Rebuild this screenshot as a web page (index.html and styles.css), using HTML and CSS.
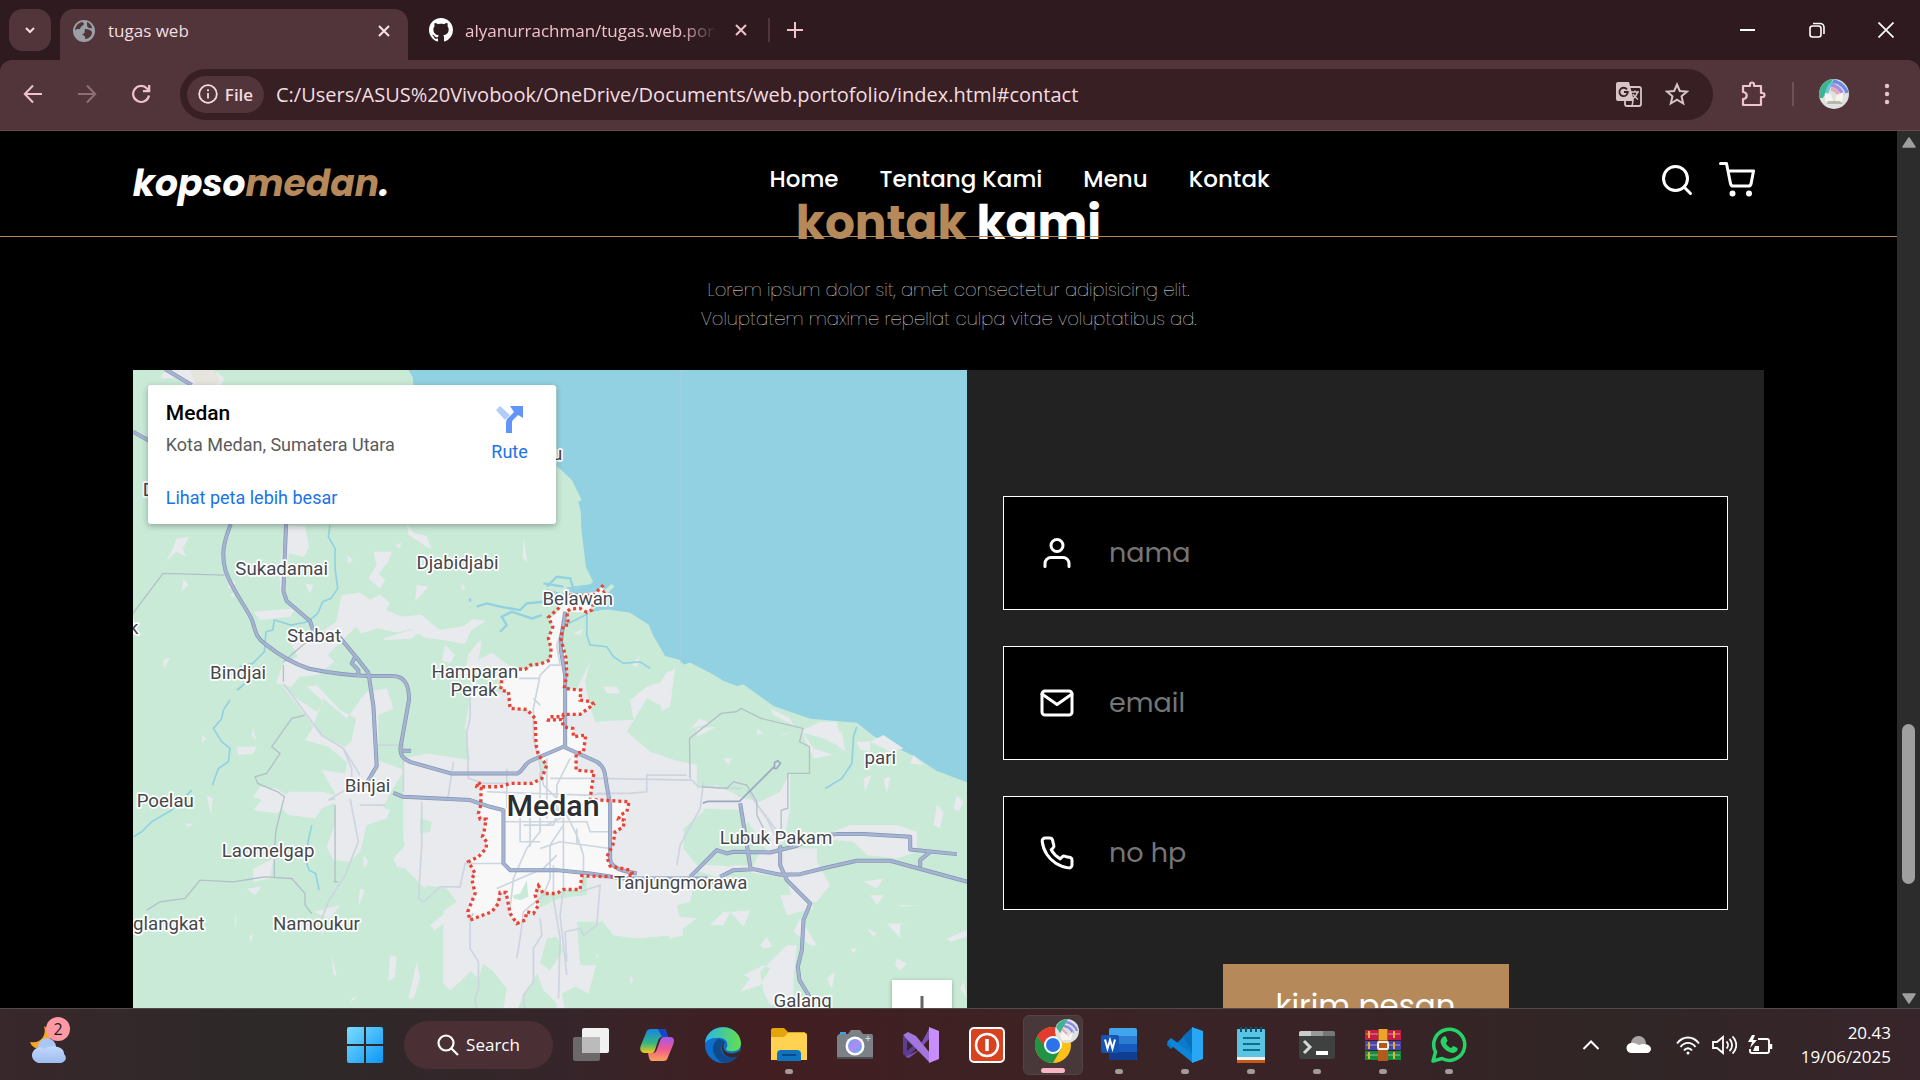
FILE: index.html
```html
<!DOCTYPE html>
<html lang="id">
<head>
<meta charset="utf-8">
<title>tugas web</title>
<link rel="stylesheet" href="styles.css">
</head>
<body>
<header class="browser">
  <div class="tabstrip">
    <button class="tab-search" aria-label="Search tabs"><svg width="12" height="12" viewBox="0 0 12 12"><path d="M2 4l4 4 4-4" fill="none" stroke="#f3dde0" stroke-width="2"/></svg></button>
    <div class="tab tab-active">
      <svg width="22" height="22" viewBox="0 0 22 22"><circle cx="11" cy="11" r="11" fill="#9aa0a6"/><path d="M9 2c3 1 2 3 0 4s-1 3-3 3-4 0-4 3c0-6 3-9 7-10zM12 9c3 0 6 1 7 3 0 4-3 7-7 7 1-3-1-3-3-5 4 0 2-3 3-5zM14 2c3 1 5 4 5 6-3 1-5-1-5-3z" fill="#51353a"/></svg>
      <span class="tab-title">tugas web</span>
      <button class="tab-close" aria-label="Close"><svg width="12" height="12" viewBox="0 0 12 12"><path d="M1 1l10 10M11 1L1 11" stroke="#f6e3e6" stroke-width="2"/></svg></button>
    </div>
    <div class="tab tab-idle">
      <svg width="24" height="24" viewBox="0 0 16 16"><path fill="#fff" d="M8 0C3.58 0 0 3.58 0 8c0 3.54 2.29 6.53 5.47 7.59.4.07.55-.17.55-.38 0-.19-.01-.82-.01-1.49-2.01.37-2.53-.49-2.69-.94-.09-.23-.48-.94-.82-1.13-.28-.15-.68-.52-.01-.53.63-.01 1.08.58 1.23.82.72 1.21 1.87.87 2.33.66.07-.52.28-.87.51-1.07-1.78-.2-3.64-.89-3.64-3.95 0-.87.31-1.59.82-2.15-.08-.2-.36-1.02.08-2.12 0 0 .67-.21 2.2.82.64-.18 1.32-.27 2-.27s1.36.09 2 .27c1.53-1.04 2.2-.82 2.2-.82.44 1.1.16 1.92.08 2.12.51.56.82 1.27.82 2.15 0 3.07-1.87 3.75-3.65 3.95.29.25.54.73.54 1.48 0 1.07-.01 1.93-.01 2.2 0 .21.15.46.55.38A8.01 8.01 0 0 0 16 8c0-4.42-3.58-8-8-8z"/></svg>
      <span class="tab-title">alyanurrachman/tugas.web.portofolio</span>
      <button class="tab-close" aria-label="Close"><svg width="12" height="12" viewBox="0 0 12 12"><path d="M1 1l10 10M11 1L1 11" stroke="#efc3cb" stroke-width="2"/></svg></button>
    </div>
    <span class="tab-divider"></span>
    <button class="new-tab" aria-label="New tab"><svg width="16" height="16" viewBox="0 0 16 16"><path d="M8 0v16M0 8h16" stroke="#efc3cb" stroke-width="2"/></svg></button>
    <div class="window-controls">
      <button aria-label="Minimize"><svg width="16" height="16" viewBox="0 0 16 16"><path d="M0 8h15" stroke="#fff" stroke-width="2"/></svg></button>
      <button aria-label="Restore"><svg width="16" height="16" viewBox="0 0 16 16" fill="none" stroke="#fff" stroke-width="1.6"><rect x="1" y="4" width="11" height="11" rx="2.5"/><path d="M4 1.5h7a4 4 0 0 1 4 4V12"/></svg></button>
      <button aria-label="Close window"><svg width="16" height="16" viewBox="0 0 16 16"><path d="M.5.5l15 15M15.500.5l-15 15" stroke="#fff" stroke-width="1.7"/></svg></button>
    </div>
  </div>
  <div class="toolbar">
    <button class="tool" aria-label="Back"><svg width="20" height="20" viewBox="0 0 20 20" fill="none" stroke="#efc3cb" stroke-width="2"><path d="M19 10H2M10 1.500L1.800 10 10 18.500"/></svg></button>
    <button class="tool" aria-label="Forward"><svg width="20" height="20" viewBox="0 0 20 20" fill="none" stroke="#8f6f74" stroke-width="2"><path d="M1 10h17M10 1.500l8.200 8.500-8.200 8.500"/></svg></button>
    <button class="tool" aria-label="Reload"><svg width="20" height="20" viewBox="0 0 20 20" fill="none" stroke="#efc3cb" stroke-width="2.200"><path d="M18 11.500A8 8 0 1 1 16 4.500l2 2.500M18.200 1v6.200H12"/></svg></button>
    <div class="omnibox">
      <button class="file-chip"><svg width="20" height="20" viewBox="0 0 20 20" fill="none" stroke="#f3dde0" stroke-width="1.800"><circle cx="10" cy="10" r="8.800"/><path d="M10 9v5.500M10 5.200v2"/></svg>File</button>
      <input class="url" type="text" aria-label="Address" value="C:/Users/ASUS%20Vivobook/OneDrive/Documents/web.portofolio/index.html#contact">
      <button class="omni-icon" aria-label="Translate"><svg width="26" height="26" viewBox="0 0 26 26"><rect x="9" y="6" width="16" height="19" rx="2" fill="none" stroke="#d8c4c7" stroke-width="1.800"/><path d="M2 1h11l5 19H2a2 2 0 0 1-2-2V3a2 2 0 0 1 2-2z" fill="#d8c4c7"/><path d="M11 8.500A4.200 4.200 0 1 0 11.800 11H8" fill="none" stroke="#371f23" stroke-width="1.800"/><path d="M15 11h8M19 9.500V11M21.500 11c-.5 3-3 5.500-5 7M17 13c1 2 3 4 5 5.500M17 20l-1 5" fill="none" stroke="#d8c4c7" stroke-width="1.500"/></svg></button>
      <button class="omni-icon" aria-label="Bookmark"><svg width="24" height="24" viewBox="0 0 24 24"><path d="M12 2.500l2.800 6.500 7.200.6-5.500 4.700 1.700 7.200-6.200-3.800-6.200 3.800 1.700-7.200L2 9.600 9.200 9z" fill="none" stroke="#d8c4c7" stroke-width="2"/></svg></button>
    </div>
    <button class="tool ext" aria-label="Extensions"><svg width="26" height="26" viewBox="0 0 26 26"><path d="M3 5h7V3.500a2 2 0 0 1 4 0V5h7v7h1.500a2 2 0 0 1 0 4H21v8H3v-6c5-.5 5-6.500 0-7z" fill="none" stroke="#efc3cb" stroke-width="2.200" stroke-linejoin="round"/></svg></button>
    <span class="tool-divider"></span>
    <button class="tool avatar" aria-label="Profile"><svg width="30" height="30" viewBox="0 0 30 30"><clipPath id="av"><circle cx="15" cy="15" r="15"/></clipPath><g clip-path="url(#av)"><rect width="30" height="30" fill="#dfe2e1"/><path d="M0 0h14L4 19H0z" fill="#3fb38d"/><g fill="none" stroke-width="3.500"><path d="M7 17C9 8 11 4 17 2" stroke="#69c8d8"/><path d="M14 2c7 1 13 7 14 12" stroke="#6f8be8"/><path d="M12 6c6 1 10 5 12 10" stroke="#a98fe0"/><path d="M12 10c5 1 7 3 8 8" stroke="#e8a7b5"/></g><path d="M6 14l6 1 3 9-9-2zM17 16l8-3-2 10-7 1z" fill="#f7f4ee"/><path d="M9 22h12l3 3H8z" fill="#b9b6ae"/></g></svg></button>
    <button class="tool menu" aria-label="Menu"><svg width="6" height="22" viewBox="0 0 6 22" fill="#efc3cb"><circle cx="3" cy="3" r="2.200"/><circle cx="3" cy="11" r="2.200"/><circle cx="3" cy="19" r="2.200"/></svg></button>
  </div>
</header>

<div class="viewport">
  <main class="page">
    <nav class="navbar">
      <a class="logo" href="#home">kopso<span>medan</span>.</a>
      <div class="nav-links">
        <a href="#home">Home</a><a href="#about">Tentang Kami</a><a href="#menu">Menu</a><a href="#contact">Kontak</a>
      </div>
      <div class="nav-extra">
        <a href="#search" aria-label="Search"><svg class="feather" viewBox="0 0 24 24"><circle cx="11" cy="11" r="8"/><path d="M21 21l-4.350-4.350"/></svg></a>
        <a href="#cart" aria-label="Cart"><svg class="feather" viewBox="0 0 24 24"><circle cx="9" cy="21" r="1"/><circle cx="20" cy="21" r="1"/><path d="M1 1h4l2.680 13.390a2 2 0 0 0 2 1.610h9.720a2 2 0 0 0 2-1.610L23 6H6"/></svg></a>
      </div>
    </nav>
    <section class="contact" id="contact">
      <h2><span>kontak</span> kami</h2>
      <p>Lorem ipsum dolor sit, amet consectetur adipisicing elit.<br>Voluptatem maxime repellat culpa vitae voluptatibus ad.</p>
      <div class="row">
        <div class="map">
          <svg class="map-art" viewBox="9 15 2502 2370" role="img" aria-label="Peta Medan">
            <rect x="9" y="15" width="2502" height="2370" fill="#c9ead7"/>
            <path fill="#92d1e2" d="M835 15l13 22 2 30h430v236l45 42 30 60-10 5 7 30 2 55 8 65 5 45 22 45-14 12-60 13 35 22 45 0 50-40 8 7-25 25-43 51 30-5 18-2 67 10 55 35 15 35 35 60 45 12 10 13 20-5 60 30 40 25 40 15 20-5 35 25 55 40 110 38 140 12 50 40 130 65 60 40 95 35V15z"/>
            <path d="M1651 15v880" stroke="#a9cfda" stroke-width="2"/>
            <g fill="#e8eaed">
              <path d="M90 40l15-25h90l15 25 5 25-40-5-35-20zM260 20l22 20-8 22h-30z"/>
              <path d="M180 15h70l20 30-20 20h-50z" fill="#e6e4dc"/>
              <path d="M475 480l50 5 12 60-15 30-45-10-10 60-15 70-5-80 15-90zM140 520l38-5-20 35 10 25-30-15-30 30 20-40zM635 690l55-8 30 22 30-15 30 25-12 20 45 20 60-5 55 45 70-10 30-22 40 5-45 30-20 40-50-10-70-10-40-25-40 10-60-12-50 15-15-20-60 60-25 25 20 20-50 40-55 5-25 30-45-10 20-60 45-20-20-40 30-25 60-10 45-30zM730 560l55 0-10 30-30 35 20 20-15 25-35-30 25-40zM830 478l20 25 40 10 15 40-20-10-50-35zM370 740l60-5 65-5-15 25-90 10zM760 820l80-25 30 5-25 20-80 5zM945 840l30 30-15 25-25-10zM1040 835l15-10-10 60 40-22 55 40 30 25-60 20-60-25-45 5 10-60zM525 655l25 5-10 25zM1180 515l12 75-14-10zM860 660l35 5-40 45z"/>
              <path d="M300 640l18 12-15 20-10-5zM160 640l15 20-20 20zM100 885l20-8-18 35zM370 1090l8 35-14-15zM215 1110l15 10-14 12zM320 1145l60 0-10 20-45 5zM300 690l15-10-5 20zM650 570l20 15-15 10zM995 655l12 15-12 5zM795 540l20-8-8 18z"/>
              <path d="M455 960l120 155 70 30 70-60-35-25-50-25-70-75-30 5 50 45-20 30-60-40zM690 1000l30-5 20 190 85 30-40 60-40 80-70-20-60 50 10-80-50-90 70 10zM615 1290l60 30 25-20 80 35-10 25-60 20-20 80-30 30-50-5-20-40 25-70zM480 1280l100 0 65 20-70 30-20 30-80-10-40-40zM390 1265l50 5 50 35-50 40-70-10 25-30-25-10zM580 1000l70 60 60-80 60-10 20 60-45 20 0 90-20 70-70-15-60-50-70-20 20-30z"/>
              <path d="M820 1180l70-15 130 20-15-100 15-90 30-20 90 10 10 45 60 20 30 200-10 60 0 500-50 80-30 70-30-30 10-60-40-50-40-30-60 60-30 25-20-20v-260l-60-30-50-50-10-100z"/>
              <path d="M975 1830l30-160 50-40 60-10 20-30 30 70 120-60 240-30 20 50-30 40-60-10-60 25-30 50 40 50-30 110-40-20-40 20 20 110-35-20 0-60-40-40-30-80-70 0-30-100-100 50zM1010 1700l50 20 10 40-25 80-40-40zM900 1680l50-40 50 15-50 10-35 30zM790 1480l40-45 60 20-20 30-20 30-50-10zM780 1770l20 5-5 60-20 15zM860 1790l10 50-20 60-15 0zM550 1640l80-20-30 40zM370 1510l60-30-10 60-50 10zM350 1570l45-5-20 25zM230 1290l18 10-5 50zM165 1375l25 0-15 12zM700 1470l15 20-15 20zM315 1640l5 30-5 20zM358 1710h10l-5 25zM605 1770l15 60-10 0zM680 1895l-20 20 5-15zM690 1570l15 5-20 50zM575 1660l15 30-15 20z"/>
              <path d="M1340 970l40-80-15 60 10 60 20 60 95-5 20 0-10-60 50-40 60-20 25-40-15 120-60 30 10 60 60 70 70 15 0 70 60-10 60 30 50 60-40 50-40-30-60-40-70 60 0 60 40 50-30 70-50 0-10 80 90 10-70 50-110 10-70-10-80-100 0-200-60-40-50-200z"/>
              <path d="M1420 1530l280-20-20 100-40 10 20 90-40 10-30-90-60 60-10-100-100-10zM1640 1500l230 0 20-40 110-10 60 0 0 40 40 70-40 50-70 10-20-80-150-25-60 20zM1890 1310l60-30 30-60 0 110-20 100-40 40-60-90-60-90zM1950 1590l90 0 10 40-80 20zM1990 1700l20-40 50 80-20 0zM1970 1740l30 0-10 100 0 60-70 20-20-40-10-60zM1860 1840l-30 40 60-20 30-50-20-10-60 30z"/>
              <path d="M2160 1380l140 0 60 20 0 60-60 20-90-10-40-40-110-10zM2070 1070l50 0 20 80-60-30-70-20zM2010 1090l40 60 60 20-60 10zM2180 1130l40 0 0 30-30-5zM2220 1130l40-20 60 40-40 10zM2350 1170l30 30-40-5zM1920 1030l60 30 10 20-60-30zM1710 1060l30 15-60 15zM1700 1090l60-5-60 30zM1780 1180l25 0-10 20zM1950 1110l50-15-40 15zM1880 1090l20 15-20 5zM2480 1290l20 20-15 30-15-10zM2420 1320l20 20-10 50-20-10zM2200 1240l25-10-20 50zM2260 1240l20-5-10 50zM2110 1110l25-10 10 60-20-15zM1610 920l25-5-45 70-10-10zM1420 965l40 0 10 20-40 0zM1530 870l-10 35-15-5zM1360 790l-10 20-20-5zM2200 1550l60-10-20 30zM2220 1590l40 0-20 30zM2300 1620l70 0-50 5zM1890 1740l20-25 15 30-25 5zM1780 1640l20 0-20 40-40 0zM1740 1660l50-35zM1800 1640l60-5-20 50zM2210 1690l30 15-10 10zM2270 1675l60 0-20 5 0 40zM2450 1720l60-25 0 20-50 15zM2300 1780l30 15-20 20-15-15zM2160 1750l20 0-10 15zM2090 1840l25-20-10 50zM2500 1850l10 50-20-30zM1500 1830l10 10-8 20z"/>
            </g>
            <g fill="#c9ead7"><path d="M890 1560l60 10 30 40-60 40-40-20zM870 1360l35 10-5 30-30 5zM1250 1720l30-5 20 40-40 60-30-20zM1340 1670l60 0 10 30-20 50 20 50-60 0zM1550 1000l40 20 20 60 60 40 10 50-60 10-60-20-70-60zM1720 1330l110 5 10 70 20 30-60 70-80-10z"/></g>
            <g fill="none" stroke="#92d1e2" stroke-width="5">
              <path d="M600 480l-5 35 20 35v60l8 60-20 30-25 10-15 35-30 25-50 10-50-15-5 30-20 5-5 60-35 35-40 10M322 975l22-20"/>
              <path d="M1040 725l30-10 40 10 60 10 20-20 50-5M1110 800l20-20-15-25 30-15 60 20 30-10M1020 710v-10M1240 655l60 10M1250 665l30-30 40 5 10 30-30 20-50-15" stroke-width="7"/>
              <path d="M1375 745l-60 30M1370 750v60l10 30 50 5 20 30 30 20 50-5 30 20M1310 670l70-10"/>
              <path d="M300 1005l-20 30-5 25-25 30 25 40 25 20-5 40-30 20-18 50M185 1275l-60 60-60 35-30 30-25 15M545 1380l-10 45-8 60 10 30 20 10 10 50M340 960l-20 15"/>
              <path d="M2180 1085l-10 30-5 80-30 45-50 30"/>
            </g>
            <path fill="#f8f8f8" d="M1420 660L1400 680 1320 690 1275 750 1255 757 1268 785 1255 820 1263 850 1260 885 1230 897 1185 913 1115 915 1112 975 1135 980 1140 1030 1190 1033 1215 1060 1218 1140 1225 1170 1250 1200 1235 1240 1205 1255 1140 1255 1055 1265 1052 1320 1045 1345 1068 1362 1057 1415 1070 1430 1068 1450 1015 1490 1035 1525 1025 1540 1035 1585 1013 1640 1020 1665 1085 1640 1110 1582 1128 1582 1140 1645 1160 1675 1185 1665 1190 1640 1210 1645 1225 1620 1215 1590 1225 1562 1240 1585 1280 1585 1300 1573 1350 1573 1355 1532 1440 1535 1510 1530 1440 1503 1430 1475 1448 1440 1455 1400 1480 1385 1497 1310 1380 1303 1392 1220 1338 1215 1338 1165 1360 1160 1367 1110 1328 1112 1328 1090 1300 1085 1300 1048 1350 1048 1390 1018 1350 1005 1352 975 1302 970 1310 930 1308 880 1292 820 1310 740 1370 742 1420 680z"/>
            <path d="M1150 1590l20-5 20-40 5 50-25 10-20-5z" fill="#c9ead7"/>
            <g fill="none" stroke="#ccd5e0" stroke-width="5">
              <path d="M1300 780l-20 60 10 60-30 0-30 30-20 100 0 90 20 80 10 60 60 60 0 60-40 60 0 100-20 50-60 50-10 80-10 60M1210 1000l20 20M1160 940h70M1070 1280l300 10 70-5M1200 1285v160M1230 1220v180l-40 50-40 90-10 90M1120 1370h250l10 30h70M1250 1380l60-30 30 60 20 60v90M1300 1330v240l-10 80 20 180M1170 1350v80h60M1130 1210v120M1260 1240h140l285 5 20 20 130 5M1180 1380h90l20-60M1400 1285h100l50-5 0-50 120 0M1270 1500v100l20 120-5 180M1350 1580l60-20-10 120-40 30-10-20-45 10 5 90M1100 1570l140-60 40-40M1230 1450l60-20 150 20M1280 1350v-90l40-80M1250 1180v180M1340 1390v50"/>
              <path d="M1020 980v80l-10 40 5 140 50 15 60 0M970 1190l-15 100-5 15M740 1140h80v140M875 1310v130l-10 160 15 10 50-45 60 0 15-70 110 0M690 1320h75M660 1300l25 130-40 100-50 80-20 50M615 1300l-20 5 50-30M460 955l115 155 65 40 50 80M640 1150l25 60 0 60M1020 1660l0 90 25 40 0 80-10 30 5 50M1230 1660l5 50-25 40v100l-30 40 5 60M1640 1500l10-60 60-110 10-80M1950 1440l-40-80-60-85M1890 1330l60 80"/>
            </g>
            <g fill="none" stroke="#b3c0c9" stroke-width="4">
              <path d="M9 745l90-120 185 5M460 900l0 50M460 890l70-60M525 1050l-40 10-60 85 25 20-40 60-35 10 8 20 60 25 20 15-25 100-5 60v80M50 1635l40-25 75-10 45-55 100 5 95-15 80 5 40 45 0 35 20 25M610 1550h15M615 1320l0 230M1020 1660l10-15"/>
              <path d="M1680 1240l-2-120 95-75 45-5 15-10 60 30 125 30-10 40 30 15v80h-65v105l-20 5v90M1715 1265l75 5 20-20 40 10 30 50v40l40 80"/>
            </g>
            <g class="roads-case">
              <path d="M105 12l80 48M9 200l50 28M302 478c-20 50-30 90-15 140 20 60 70 120 80 150s10 50 40 70c50 40 90 60 130 73 50 10 120 20 180 22h70c40 0 50 30 50 70l-25 140c-5 30 10 40 30 48l120 34h200c20-10 20-30 40-38L1300 1145 1400 1190C1425 1205 1425 1230 1428 1250L1440 1320V1480C1440 1510 1480 1518 1520 1525"/>
              <path d="M468 478l-8 200 10 30 70 60 10 30 80 20 50 60 35 45 15 100 10 180-35 60M675 875l-10 20 20 20 0 20M790 1283l30 12 200 10 60 20 40 10 0 160 20 20 140 0 100 10 100 15 250 0 30 15M1305 740c-5 50-20 90-10 130l10 60v220"/>
              <path d="M1680 1535l70-70 10-10 30 10 20-5 110 2 80-20 60-30 60-5 80 0 140 8v38l140 14M1770 1535l40-20 60-3 80 17 60-2 80-20 90-20h100l110 30 130 35M1830 1315l10 60 22 140M1950 1440v60l20 45 70 70-20 50-5 90-12 50 5 40 30 50M2370 1505l0-20 30-25M818 1157h25"/>
            </g>
            <g class="roads">
              <path d="M105 12l80 48M9 200l50 28M302 478c-20 50-30 90-15 140 20 60 70 120 80 150s10 50 40 70c50 40 90 60 130 73 50 10 120 20 180 22h70c40 0 50 30 50 70l-25 140c-5 30 10 40 30 48l120 34h200c20-10 20-30 40-38L1300 1145 1400 1190C1425 1205 1425 1230 1428 1250L1440 1320V1480C1440 1510 1480 1518 1520 1525"/>
              <path d="M468 478l-8 200 10 30 70 60 10 30 80 20 50 60 35 45 15 100 10 180-35 60M675 875l-10 20 20 20 0 20M790 1283l30 12 200 10 60 20 40 10 0 160 20 20 140 0 100 10 100 15 250 0 30 15M1305 740c-5 50-20 90-10 130l10 60v220"/>
              <path d="M1680 1535l70-70 10-10 30 10 20-5 110 2 80-20 60-30 60-5 80 0 140 8v38l140 14M1770 1535l40-20 60-3 80 17 60-2 80-20 90-20h100l110 30 130 35M1830 1315l10 60 22 140M1950 1440v60l20 45 70 70-20 50-5 90-12 50 5 40 30 50M2370 1505l0-20 30-25M818 1157h25"/>
            </g>
            <path d="M1718 1314l15-5h95l105-105 0-12 10-5 8 8-12 15h-8" fill="none" stroke="#9aa8c4" stroke-width="5"/>
            <path fill="none" stroke="#ea4335" stroke-width="10" stroke-dasharray="9 9" d="M1420 660L1400 680 1390 690 1320 690 1285 730 1255 757 1268 785 1255 820 1263 850 1260 885 1230 897 1200 900 1185 913 1160 912 1115 945 1112 975 1135 980 1140 1030 1190 1033 1215 1060 1218 1140 1225 1170 1250 1200 1235 1240 1205 1255 1140 1255 1110 1265 1055 1265 1045 1250 1040 1265 1053 1270 1052 1320 1045 1345 1050 1362 1068 1362 1062 1400 1057 1415 1070 1430 1068 1450 1045 1475 1015 1490 1035 1525 1025 1540 1035 1585 1013 1640 1020 1665 1045 1655 1085 1640 1105 1615 1110 1582 1128 1582 1140 1645 1160 1675 1185 1665 1190 1640 1210 1645 1225 1620 1215 1590 1225 1562 1240 1585 1280 1585 1300 1573 1350 1573 1355 1532 1440 1535 1510 1530 1500 1515 1440 1503 1430 1475 1448 1440 1455 1400 1480 1385 1482 1365 1465 1362 1470 1350 1490 1340 1497 1310 1380 1303 1385 1265 1392 1220 1338 1215 1338 1165 1360 1160 1367 1110 1330 1115 1328 1090 1300 1085 1295 1063 1255 1065 1258 1055 1298 1055 1300 1048 1350 1048 1390 1018 1385 1010 1350 1005 1352 975 1302 970 1310 930 1308 880 1292 820 1300 780 1315 780 1310 740 1320 732 1350 730 1370 742 1385 735 1390 710 1424 678"/>
            <g class="labels">
              <text x="316" y="630">Sukadamai</text><text x="859" y="612">Djabidjabi</text>
              <text x="471" y="830">Stabat</text><text x="240" y="941">Bindjai</text>
              <text x="904" y="938">Hamparan</text><text x="961" y="993">Perak</text>
              <text x="1237" y="721">Belawan</text><text x="38" y="394">D</text><text x="-3" y="808">k</text><text x="1266" y="285">u</text>
              <text x="644" y="1280">Binjai</text><text x="20" y="1326">Poelau</text>
              <text x="275" y="1476">Laomelgap</text><text x="429" y="1695">Namoukur</text>
              <text x="-22" y="1694">nglangkat</text><text x="2203" y="1197">pari</text>
              <text x="1769" y="1436">Lubuk Pakam</text><text x="1452" y="1571">Tanjungmorawa</text>
              <text x="1930" y="1926">Galang</text>
              <text class="city" x="1129" y="1352">Medan</text>
            </g>
          </svg>
          <div class="place-card">
            <div class="place-info">
              <strong>Medan</strong>
              <span>Kota Medan, Sumatera Utara</span>
              <a href="#map">Lihat peta lebih besar</a>
            </div>
            <a class="route" href="#route"><svg width="28" height="28" viewBox="0 0 28 28"><path d="M0 5l4-4 10 9-5 5z" fill="#b3cdfb"/><path d="M10 28V18c0-3 1-4 3-6l5-5-4-6h13v12l-5-3-5 5c-1 1-1 2-1 3v10z" fill="#6196f8"/></svg>Rute</a>
          </div>
          <div class="zoom"><button aria-label="Perbesar"><svg width="20" height="28" viewBox="0 0 20 28"><path d="M10 0v28M0 14h20" stroke="#666" stroke-width="3"/></svg></button></div>
        </div>
        <form class="form">
          <label class="field"><svg class="feather" viewBox="0 0 24 24"><path d="M20 21v-2a4 4 0 0 0-4-4H8a4 4 0 0 0-4 4v2"/><circle cx="12" cy="7" r="4"/></svg><input type="text" placeholder="nama" aria-label="nama"></label>
          <label class="field"><svg class="feather" viewBox="0 0 24 24"><path d="M4 4h16c1.100 0 2 .9 2 2v12c0 1.100-.9 2-2 2H4c-1.100 0-2-.9-2-2V6c0-1.100.9-2 2-2z"/><path d="M22 6l-10 7L2 6"/></svg><input type="text" placeholder="email" aria-label="email"></label>
          <label class="field"><svg class="feather" viewBox="0 0 24 24"><path d="M22 16.920v3a2 2 0 0 1-2.180 2 19.790 19.790 0 0 1-8.630-3.070 19.500 19.500 0 0 1-6-6 19.790 19.790 0 0 1-3.070-8.670A2 2 0 0 1 4.110 2h3a2 2 0 0 1 2 1.720 12.840 12.840 0 0 0 .7 2.810 2 2 0 0 1-.45 2.110L8.090 9.910a16 16 0 0 0 6 6l1.270-1.270a2 2 0 0 1 2.110-.45 12.840 12.840 0 0 0 2.810.7A2 2 0 0 1 22 16.920z"/></svg><input type="text" placeholder="no hp" aria-label="no hp"></label>
          <button class="send" type="button">kirim pesan</button>
        </form>
      </div>
    </section>
  </main>
  <div class="scrollbar">
    <svg width="14" height="11" viewBox="0 0 14 11"><path d="M7 1l6 9H1z" fill="#9f9f9f" stroke="#9f9f9f" stroke-width="1.500" stroke-linejoin="round"/></svg>
    <div class="track"><div class="thumb"></div></div>
    <svg width="14" height="11" viewBox="0 0 14 11"><path d="M7 10l6-9H1z" fill="#9f9f9f" stroke="#9f9f9f" stroke-width="1.500" stroke-linejoin="round"/></svg>
  </div>
</div>

<footer class="taskbar">
  <div class="widgets">
    <button class="weather" aria-label="Weather"><svg width="38" height="38" viewBox="0 0 38 38"><defs><linearGradient id="cl" x1="0" y1="0" x2="0" y2="1"><stop offset="0" stop-color="#c3d9fb"/><stop offset="1" stop-color="#9dbcf0"/></linearGradient></defs><path d="M15 0c3 9-3 18-14 16 2 6 8 8 14 6 8-3 8-17 0-22z" fill="#f7a823"/><circle cx="18" cy="21" r="9" fill="#a9c6f5"/><path d="M9 37a8 8 0 1 1 7-14c4-5 20-3 19 5 4 4 1 9-5 9z" fill="url(#cl)"/></svg><span class="badge">2</span></button>
  </div>
  <div class="apps">
    <button class="app" aria-label="Start"><svg width="36" height="36" viewBox="0 0 36 36"><defs><linearGradient id="wi" x1="0" y1="0" x2="1" y2="1"><stop offset="0" stop-color="#7ddcff"/><stop offset="1" stop-color="#0a97f5"/></linearGradient></defs><path fill="url(#wi)" d="M2 0h15v17H0V2a2 2 0 0 1 2-2zM19 0h15a2 2 0 0 1 2 2v15H19zM0 19h17v17H2a2 2 0 0 1-2-2zM19 19h17v15a2 2 0 0 1-2 2H19z"/></svg></button>
    <button class="search-pill"><svg width="22" height="22" viewBox="0 0 22 22" fill="none" stroke="#fff" stroke-width="2.200"><circle cx="9" cy="9" r="7.500"/><path d="M14.500 14.500l6.500 6.500"/></svg>Search</button>
    <button class="app" aria-label="Task view"><svg width="36" height="34" viewBox="0 0 36 34"><rect y="9" width="27" height="24" rx="2" fill="#6b6969"/><rect x="9" width="27" height="25" rx="2" fill="#f1f1f1"/><path d="M9 9h18v16H9z" fill="#bcbbbb"/></svg></button>
    <button class="app" aria-label="Copilot"><svg width="34" height="32" viewBox="0 0 34 32"><defs><linearGradient id="c1" x1="0" y1="0" x2="0" y2="1"><stop offset="0" stop-color="#1785e8"/><stop offset=".6" stop-color="#37b67c"/><stop offset="1" stop-color="#f6c915"/></linearGradient><linearGradient id="c2" x1="0" y1="0" x2="0" y2="1"><stop offset="0" stop-color="#a259f0"/><stop offset=".5" stop-color="#f0598f"/><stop offset="1" stop-color="#fba35c"/></linearGradient></defs><path d="M11 0h13c2 0 2 2 3 5l1 3h-6c-2 0-3 1-4 4l-3 9c-1 3-2 3-4 3H5c-4 0-6-3-4-8L6 4c1-3 2-4 5-4z" fill="url(#c1)"/><path d="M18 0h6c2 0 2 2 3 5l1 3h-6z" fill="#1447c6"/><path d="M23 32H12c-2 0-3-2-4-8h5c2 0 3-1 4-4l3-8c1-3 2-4 4-4h6c4 0 5 3 3 8l-5 12c-1 3-2 4-5 4z" fill="url(#c2)"/></svg></button>
    <button class="app" aria-label="Edge"><svg width="36" height="36" viewBox="0 0 36 36"><defs><linearGradient id="e1"><stop offset="0" stop-color="#2bb4ea"/><stop offset="1" stop-color="#63e048"/></linearGradient></defs><circle cx="18" cy="18" r="18" fill="#0d6fc9"/><path d="M0 16C2-5 34-5 36 16c0 7-5 9-12 8-4-1-3-2-2-4 2-6-4-10-10-9C6 11 2 13 0 16z" fill="url(#e1)"/><path d="M13 12c-9 6-5 22 7 24 6 0 11-4 13-8-5 3-14 3-16-3-2-4 0-8 3-10-2-2-4-3-7-3z" fill="#114a8b"/><path d="M20 15c-3 4-2 9 3 11 4 1 9 0 11-2l2 2-2 3c-5 2-14 2-16-4-2-4-1-8 2-10z" fill="#3a2527"/></svg></button>
    <button class="app run" aria-label="Explorer"><svg width="36" height="33" viewBox="0 0 36 33"><path d="M0 2c0-1 1-2 2-2h11l4 4h17v6H0z" fill="#e2a50b"/><path d="M0 9h13l4-4h17a2 2 0 0 1 2 2v25H0z" fill="#ffd252"/><path d="M6 33v-7a4 4 0 0 1 4-4h16a4 4 0 0 1 4 4v7z" fill="#0f74bf"/><path d="M11 27h14" stroke="#0a4a86" stroke-width="2"/></svg></button>
    <button class="app" aria-label="Camera"><svg width="36" height="30" viewBox="0 0 36 30"><defs><linearGradient id="ca" x1="0" y1="0" x2="1" y2="1"><stop offset="0" stop-color="#5aa6f5"/><stop offset=".5" stop-color="#b48af0"/><stop offset="1" stop-color="#3fb6f0"/></linearGradient></defs><path d="M3 2h6v5H3z" fill="#35a4e8"/><path d="M2 4h9l3-4h9l3 4h8a2 2 0 0 1 2 2v21H0V6z" fill="#7c8087"/><path d="M0 27h36v2H0z" fill="#4b4d51"/><circle cx="18" cy="16" r="9.500" fill="#fff"/><circle cx="18" cy="16" r="7" fill="url(#ca)"/><path d="M31 6v5M28.500 8.500h5" stroke="#d5d7da"/></svg></button>
    <button class="app" aria-label="Visual Studio"><svg width="36" height="36" viewBox="0 0 36 36"><path d="M0 10l4-3 10 9v5L4 30l-4-3z" fill="#5d3c94"/><path d="M4 14v10l6-5z" fill="#38272a"/><path d="M14 24L27 0v11L14 25l-8 6-4-1z" fill="#7a53b3"/><path d="M0 8l5-3 8 4 14 17v10z" fill="#a276dc"/><path d="M26 0l10 4v28l-10 4z" fill="#c78dfb"/></svg></button>
    <button class="app" aria-label="Shutdown"><svg width="36" height="36" viewBox="0 0 36 36"><rect x="1" y="1" width="34" height="34" rx="4" fill="#d9421f" stroke="#fff" stroke-width="2"/><circle cx="18" cy="18" r="11" fill="none" stroke="#fff" stroke-width="2.500"/><path d="M18 12v12" stroke="#fff" stroke-width="3.500"/></svg></button>
    <button class="app run current" aria-label="Chrome"><svg width="44" height="44" viewBox="0 0 44 44"><circle cx="18" cy="26" r="18" fill="#fbc116"/><path d="M2.400 17A18 18 0 0 1 33.600 17H18l-8 13z" fill="#e33b2e"/><path d="M2.400 17A18 18 0 0 0 18 44l8-14H11z" fill="#229344"/><circle cx="18" cy="26" r="9" fill="#fff"/><circle cx="18" cy="26" r="7" fill="#2a74e8"/><circle cx="32" cy="12" r="12" fill="#dfe2e1"/><path d="M21 8c3-6 8-8 12-8l-8 14z" fill="#3fb38d"/><path d="M30 3c6 0 11 5 12 9M29 7c5 1 8 4 9 7" fill="none" stroke="#8a8fe4" stroke-width="2.500"/><path d="M25 16l4-5 4 7 5-6-2 9-9 0z" fill="#f8f5ef"/><path d="M27 10l5 5" stroke="#e8a7b5" stroke-width="2"/></svg></button>
    <button class="app run" aria-label="Word"><svg width="36" height="33" viewBox="0 0 36 33"><rect x="8" width="28" height="32" rx="2" fill="#41a5ee"/><path d="M8 8h28v8H8z" fill="#2b7cd3"/><path d="M8 16h28v8H8z" fill="#185abd"/><path d="M8 24h28v6a2 2 0 0 1-2 2H8z" fill="#103f91"/><rect y="7" width="18" height="18" rx="2" fill="#1553b5"/><path d="M4 11.500l2.500 9 2.500-8.500 2.500 8.500 2.500-9" fill="none" stroke="#fff" stroke-width="2"/></svg></button>
    <button class="app run" aria-label="VS Code"><svg width="36" height="36" viewBox="0 0 36 36"><path d="M26 0L4 22l-4-4 1-4 3-1 22 14z" fill="#0a7acb"/><path d="M26 36L0 15l4-4 22 16z" fill="#0f85d8"/><path d="M26 0l-10 9 10 17z" fill="#0b6eb8"/><path d="M25 0l11 4v28l-11 4z" fill="#28a8f4"/></svg></button>
    <button class="app run" aria-label="Notepad"><svg width="30" height="36" viewBox="0 0 30 36"><rect x="1" y="2" width="28" height="30" rx="1" fill="#5ac5e3"/><path d="M1 30h28v3H1z" fill="#f4f1ee"/><path d="M1 33h28v3H1z" fill="#c35a17"/><path d="M5 0v5M10 0v5M15 0v5M20 0v5M25 0v5" stroke="#0d5471" stroke-width="2"/><path d="M7 11h17M7 17h17M7 23h17" stroke="#0f6c91" stroke-width="2"/></svg></button>
    <button class="app run" aria-label="Terminal"><svg width="36" height="28" viewBox="0 0 36 28"><rect width="36" height="28" rx="2" fill="#3f4040"/><path d="M2 0h10v5H0V2a2 2 0 0 1 2-2z" fill="#ccc"/><path d="M12 0h12v5H12z" fill="#9a9a9a"/><path d="M24 0h10a2 2 0 0 1 2 2v3H24z" fill="#777"/><path d="M5 10l6 6-6 6" fill="none" stroke="#d6d6d6" stroke-width="3"/><path d="M17 20h12v4H17z" fill="#fff"/></svg></button>
    <button class="app run" aria-label="WinRAR"><svg width="36" height="32" viewBox="0 0 36 32"><path d="M0 1h36v10H0z" fill="#c41e45"/><path d="M0 12h36v9H0z" fill="#4b43a8"/><path d="M0 22h36v9H0z" fill="#178c3c"/><path d="M1 5h34M1 16h34M1 26h34" stroke="#fff" opacity=".25" stroke-width="2"/><path d="M4 2v7M4 13v7M4 23v7M29 2v7M29 13v7M29 23v7" stroke="#e7b52d" stroke-width="2"/><path d="M13 0h10v32H13z" fill="#b35a1d"/><path d="M14 0h8v11h-8z" fill="#e9a52a"/><rect x="13" y="13" width="10" height="7" rx="1" fill="none" stroke="#f0eee8" stroke-width="2"/></svg></button>
    <button class="app run" aria-label="WhatsApp"><svg width="36" height="36" viewBox="0 0 36 36"><path d="M2 34l2.500-9A15.500 15.500 0 1 1 11 31.500z" fill="none" stroke="#25d366" stroke-width="3.500" stroke-linejoin="round"/><path d="M12 10c1-1 3-1 3 0l1.500 3.500c0 1-1.500 2-1.500 3 1 2 3 4 5 4.500 1 0 1.500-2 2.500-2l4 2c1 3-3 5-5 5-6-1-11-6-12-11 0-2 1-4 2.500-5z" fill="#25d366"/></svg></button>
  </div>
  <div class="tray">
    <svg width="18" height="10" viewBox="0 0 18 10"><path d="M1.500 9L9 1.500 16.500 9" fill="none" stroke="#fff" stroke-width="2"/></svg>
    <svg class="cloud" width="26" height="18" viewBox="0 0 26 18"><path d="M5 8a7.500 7.500 0 0 1 15-1l-5 9H5z" fill="#a9a4a4"/><path d="M6 17a5 5 0 0 1-1-10c3-1 5 1 8 2 4-2 12-1 12 4 0 2-2 4-4 4z" fill="#fff"/></svg>
    <div class="status">
      <svg width="26" height="20" viewBox="0 0 26 20" fill="none" stroke="#fff" stroke-width="1.900"><path d="M2 8.500c6-8 16-8 22 0M5.500 12c4-5.500 11-5.500 15 0M9 15.500c2-3 6-3 8 0"/><circle cx="13" cy="18" r="1.500" fill="#fff" stroke="none"/></svg>
      <svg width="26" height="20" viewBox="0 0 26 20" fill="none" stroke="#fff" stroke-width="1.800"><path d="M2 7h4l6-5v16l-6-5H2zM15.500 6.500c2 2 2 5 0 7M18.500 4c3.500 3.500 3.500 8.500 0 12M21.500 1.500c5 5 5 12 0 17"/></svg>
      <svg width="26" height="20" viewBox="0 0 26 20" fill="none" stroke="#fff" stroke-width="1.900"><path d="M11 4h9a2 2 0 0 1 2 2v10a2 2 0 0 1-2 2H5a2 2 0 0 1-2-2v-2"/><path d="M24 9v5" stroke-width="2.500"/><path d="M5 0L1 7h4L3 13l7-8H6l2-5zM8 11h4v5H6z" fill="#fff" stroke="none"/></svg>
    </div>
    <div class="clock"><span>20.43</span><span>19/06/2025</span></div>
  </div>
</footer>
</body>
</html>
```
FILE: styles.css
```css
* { box-sizing: border-box; }
body { margin: 0; height: 100vh; display: flex; flex-direction: column; overflow: hidden; background: #000; font-family: "Open Sans", "Noto Sans", sans-serif; }
button { border: 0; padding: 0; margin: 0; background: none; font: inherit; color: inherit; display: flex; align-items: center; justify-content: center; }
input { border: 0; outline: 0; background: none; font: inherit; padding: 0; min-width: 0; }
a { color: inherit; text-decoration: none; }
svg { flex: none; display: block; }

/* browser window */
.browser { flex: none; background: #2f1a1f; color: #f3dde0; }
.tabstrip { height: 60px; display: flex; align-items: center; padding-left: 9px; }
.tab-search { width: 42px; height: 42px; border-radius: 14px; background: #51353a; }
.tab { display: flex; align-items: center; font-size: 17px; }
.tab-title { flex: 1; white-space: nowrap; overflow: hidden; }
.tab-close { width: 24px; height: 24px; }
.tab-active { align-self: flex-end; width: 348px; height: 51px; margin-left: 9px; padding: 0 12px 8px 13px; gap: 13px; border-radius: 14px 14px 0 0; background: #51353a; }
.tab-idle { width: 324px; margin-left: 21px; gap: 12px; color: #efc3cb; }
.tab-idle .tab-title { -webkit-mask-image: linear-gradient(90deg, #000 85%, transparent); mask-image: linear-gradient(90deg, #000 85%, transparent); }
.tab-divider { width: 2px; height: 24px; margin-left: 15px; background: #51353a; }
.new-tab { margin-left: 17px; }
.window-controls { display: flex; margin-left: auto; }
.window-controls button { width: 69px; height: 58px; }
.toolbar { height: 71px; display: flex; align-items: center; padding: 0 19px 2px 6px; background: #51353a; border-bottom: 1px solid #634a4f; border-radius: 12px 12px 0 0; }
.tool { width: 54px; height: 44px; }
.omnibox { flex: 1; height: 51px; display: flex; align-items: center; margin-left: 12px; padding: 0 12px 0 7px; border-radius: 26px; background: #371f23; }
.file-chip { width: 77px; height: 37px; gap: 7px; border-radius: 19px; background: #51353a; font-size: 17px; font-weight: 600; }
.url { flex: 1; margin-left: 12px; color: #f3dde0; font-size: 20px; }
.omni-icon { width: 48px; height: 40px; }
.ext { width: 79px; }
.tool-divider { width: 2px; height: 24px; background: #6d5156; }
.avatar { width: 79px; }
.menu { width: 28px; }

/* web page */
.viewport { flex: 1; min-height: 0; display: flex; }
.page { flex: 1; position: relative; overflow: hidden; background: #000; color: #fff; font-family: "Poppins", "Inter", sans-serif; }
.navbar { position: absolute; top: 0; left: 0; right: 0; z-index: 2; height: 106px; display: flex; align-items: center; justify-content: space-between; padding: 0 7% 9px; border-bottom: 1px solid #b6895b; }
.logo { padding-top: 9px; font-size: 36px; font-weight: 700; font-style: italic; }
.logo span, .contact h2 span { color: #b6895b; }
.nav-links { display: flex; gap: 41px; font-size: 23px; font-weight: 500; }
.nav-extra { display: flex; gap: 24px; margin: 2px 9px 0; }
.feather { width: 36px; height: 36px; fill: none; stroke: currentColor; stroke-width: 2; stroke-linecap: round; stroke-linejoin: round; }
.contact { padding: 62px 7% 0; text-align: center; }
.contact h2 { margin: 0; font-size: 47px; line-height: 60px; font-weight: 700; }
.contact p { margin: 22px 0 37px; font-size: 18px; line-height: 29px; font-weight: 200; color: #fff; }
.row { display: grid; grid-template-columns: 834fr 797fr; background: #222; text-align: left; }
.map { position: relative; font-family: "Roboto", sans-serif; }
.map-art { width: 100%; height: auto; }
.roads-case, .roads { fill: none; stroke-linejoin: round; }
.roads-case { stroke: #8594b5; stroke-width: 12; }
.roads { stroke: #a5b4d0; stroke-width: 8; }
.labels { font-size: 56px; fill: #45484c; stroke: #fff; stroke-width: 10; stroke-linejoin: round; paint-order: stroke; }
.labels .city { font-size: 91px; font-weight: 500; fill: #2c2e31; }
.place-card { position: absolute; top: 15px; left: 15px; width: 408px; height: 139px; padding: 16px 28px 0 18px; display: flex; justify-content: space-between; border-radius: 3px; background: #fff; box-shadow: 0 2px 6px rgba(0, 0, 0, .3); font-size: 18px; line-height: 24px; }
.place-info { display: flex; flex-direction: column; color: #5b5b5b; }
.place-info strong { margin-bottom: 8px; color: #000; font-size: 21px; font-weight: 500; }
.place-info a { margin-top: 29px; color: #1a73e8; }
.route { display: flex; flex-direction: column; align-items: center; gap: 7px; padding-top: 4px; color: #1a73e8; }
.zoom { position: absolute; right: 15px; bottom: 120px; width: 60px; height: 60px; background: #fff; box-shadow: 0 1px 4px rgba(0, 0, 0, .3); }
.zoom button { width: 60px; height: 60px; }
.form { padding: 126px 36px 0; display: flex; flex-direction: column; gap: 36px; font-size: 27px; }
.field { height: 114px; display: flex; align-items: center; gap: 34px; padding: 0 35px; border: 1px solid #fff; background: #000; }
.field input { flex: 1; color: #fff; font-weight: 400; }
.field input::placeholder { color: #757575; opacity: 1; }
.send { align-self: center; width: 286px; height: 82px; margin-top: 18px; background: #b6895b; color: #fff; font-size: 31px; }
.scrollbar { width: 23px; display: flex; flex-direction: column; align-items: center; padding: 6px 0 4px; background: #2c2c2c; }
.track { flex: 1; width: 13px; }
.thumb { height: 19%; margin-top: 4430%; border-radius: 7px; background: #9f9f9f; }

/* taskbar */
.taskbar { flex: none; height: 72px; display: grid; grid-template-columns: minmax(0, 332px) auto 1fr; border-top: 1px solid #514b4d; background: linear-gradient(90deg, #38272b, #2d2929 14%, #36252a 30%, #421e21 40%, #3b2426 60%, #3a2327 68%, #302626 84%, #38252b); color: #fff; }
.widgets { display: flex; align-items: center; padding-left: 29px; }
.weather { position: relative; }
.badge { position: absolute; left: 17px; top: -9px; width: 24px; height: 24px; border-radius: 50%; background: #ff99a4; color: #1c1c1c; font-size: 16px; line-height: 24px; }
.apps { display: flex; align-items: center; }
.app { position: relative; width: 66px; height: 60px; }
.run::after { content: ""; position: absolute; bottom: 1px; left: 29px; width: 8px; height: 5px; border-radius: 3px; background: #a39a9b; }
.current { width: 60px; margin: 0 3px; border-radius: 6px; background: #48383a; border: 1px solid #524345; }
.current::after { left: 17px; width: 24px; background: #fbb6c6; }
.current svg { margin: -8px 0 0 8px; }
.search-pill { width: 149px; height: 48px; margin: 0 5px 0 6px; gap: 7px; border-radius: 24px; background: #4a3034; font-size: 17px; }
.tray { display: flex; align-items: center; justify-content: flex-end; padding-right: 29px; }
.cloud { margin: 0 23px 0 26px; }
.status { display: flex; gap: 10px; margin-right: 28px; }
.clock { display: flex; flex-direction: column; text-align: right; font-size: 17px; line-height: 24px; }
```
